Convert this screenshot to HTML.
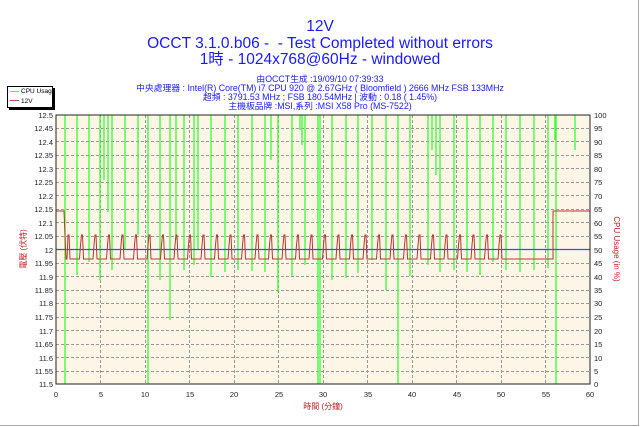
<!DOCTYPE html>
<html><head><meta charset="utf-8"><style>
body{margin:0;width:640px;height:427px;background:#fff;overflow:hidden;font-family:"Liberation Sans","Noto Sans CJK TC",sans-serif}
.t{position:absolute;left:0;width:640px;text-align:center;color:#1a1aff;white-space:nowrap}
</style></head><body>
<div style="position:absolute;left:0;top:0;width:638px;height:425px;border-right:1px solid #aaa;border-bottom:1px solid #aaa"></div>
<div class="t" style="top:18px;font-size:15.5px;line-height:17px">12V</div>
<div class="t" style="top:35px;font-size:15.5px;line-height:17px">OCCT 3.1.0.b06 - &nbsp;- Test Completed without errors</div>
<div class="t" style="top:51px;font-size:15.5px;line-height:17px">1時 - 1024x768@60Hz - windowed</div>
<div class="t" style="top:75px;font-size:8.8px;line-height:9px">由OCCT生成 :19/09/10 07:39:33<br>中央處理器 : Intel(R) Core(TM) i7 CPU 920 @ 2.67GHz ( Bloomfield ) 2666 MHz FSB 133MHz<br>超頻 : 3791.53 MHz ; FSB 180.54MHz | 波動 : 0.18 ( 1.45%)<br>主機板品牌 :MSI,系列 :MSI X58 Pro (MS-7522)</div>
<div style="position:absolute;left:7px;top:86px;width:44px;height:20px;border:1px solid #000;box-shadow:2px 2px 0 #000;background:#fff;font-size:6.5px;line-height:9.5px;white-space:nowrap;overflow:hidden">
<div><span style="display:inline-block;width:9px;height:1px;background:#4f4;vertical-align:middle;margin:0 2px 0 2px"></span>CPU Usage</div>
<div><span style="display:inline-block;width:9px;height:1px;background:#c44;vertical-align:middle;margin:0 2px 0 2px"></span>12V</div></div>
<svg width="640" height="427" style="position:absolute;left:0;top:0" font-family="Liberation Sans, sans-serif" font-size="7.5">
<rect x="56" y="115" width="534" height="269" fill="#fdf6e6"/>
<g stroke="#999" stroke-dasharray="3,2" stroke-width="1">
<path d="M100.5 115V384M145.5 115V384M189.5 115V384M234.5 115V384M278.5 115V384M323.5 115V384M367.5 115V384M412.5 115V384M456.5 115V384M501.5 115V384M545.5 115V384"/>
<path d="M56 128.5H590M56 141.5H590M56 155.5H590M56 168.5H590M56 182.5H590M56 195.5H590M56 209.5H590M56 222.5H590M56 236.5H590M56 263.5H590M56 276.5H590M56 290.5H590M56 303.5H590M56 317.5H590M56 330.5H590M56 344.5H590M56 357.5H590M56 371.5H590"/>
</g>
<g stroke="#3f3" stroke-width="1.3" fill="none">
<path d="M65 115V384M148 115V384M318 115V384M320 115V384M398 115V384M556 115V384M100 115V280M112 115V270M125 115V250M138 115V235M170 115V320M176 115V240M184 115V270M194 115V265M211 115V277M225 115V272M238 115V270M252 115V271M265 115V272M278 115V292M292 115V276M305 115V265M332 115V280M346 115V278M358 115V273M372 115V260M386 115V290M410 115V276M428 115V265M440 115V272M454 115V270M467 115V272M480 115V275M493 115V262M506 115V270M520 115V272M534 115V270M548 115V268M104 115V180M108 115V212M271 115V160M278 115V150M300 115V130M302 115V145M432 115V150M436 115V175M555 115V140M575 115V150M77 115V275M89 115V262M160 115V280M198 115V250"/>
</g>
<path d="M56 249.5H590" stroke="#44f" stroke-width="1.2"/>
<path d="M56 211H64L66 259h1l1-24h1l1 24h9.5l1-14l1-10h1l1 24 h9.5l1-14l1-10h1l1 24 h9.5l1-14l1-10h1l1 24 h9.5l1-14l1-10h1l1 24 h9.5l1-14l1-10h1l1 24 h9.5l1-14l1-10h1l1 24 h9.5l1-14l1-10h1l1 24 h9.5l1-14l1-10h1l1 24 h9.5l1-14l1-10h1l1 24 h9.5l1-14l1-10h1l1 24 h9.5l1-14l1-10h1l1 24 h9.5l1-14l1-10h1l1 24 h9.5l1-14l1-10h1l1 24 h9.5l1-14l1-10h1l1 24 h9.5l1-14l1-10h1l1 24 h9.5l1-14l1-10h1l1 24 h9.5l1-14l1-10h1l1 24 h9.5l1-14l1-10h1l1 24 h9.5l1-14l1-10h1l1 24 h9.5l1-14l1-10h1l1 24 h9.5l1-14l1-10h1l1 24 h9.5l1-14l1-10h1l1 24 h9.5l1-14l1-10h1l1 24 h9.5l1-14l1-10h1l1 24 h9.5l1-14l1-10h1l1 24 h9.5l1-14l1-10h1l1 24 h9.5l1-14l1-10h1l1 24 h9.5l1-14l1-10h1l1 24 h9.5l1-14l1-10h1l1 24 h9.5l1-14l1-10h1l1 24 h9.5l1-14l1-10h1l1 24 h9.5l1-14l1-10h1l1 24 H553V211H590" stroke="#b33" stroke-width="1" fill="none"/>
<rect x="56" y="115" width="534" height="269" fill="none" stroke="#222" stroke-width="1"/>
<g fill="#222" text-anchor="end">
<text x="53" y="118">12.5</text><text x="53" y="131">12.45</text><text x="53" y="145">12.4</text><text x="53" y="158">12.35</text><text x="53" y="172">12.3</text><text x="53" y="185">12.25</text><text x="53" y="199">12.2</text><text x="53" y="212">12.15</text><text x="53" y="226">12.1</text><text x="53" y="239">12.05</text><text x="53" y="253">12</text><text x="53" y="266">11.95</text><text x="53" y="280">11.9</text><text x="53" y="293">11.85</text><text x="53" y="306">11.8</text><text x="53" y="320">11.75</text><text x="53" y="334">11.7</text><text x="53" y="347">11.65</text><text x="53" y="361">11.6</text><text x="53" y="374">11.55</text><text x="53" y="387">11.5</text>
</g>
<g fill="#222">
<text x="594" y="118">100</text><text x="594" y="131">95</text><text x="594" y="145">90</text><text x="594" y="158">85</text><text x="594" y="172">80</text><text x="594" y="185">75</text><text x="594" y="199">70</text><text x="594" y="212">65</text><text x="594" y="226">60</text><text x="594" y="239">55</text><text x="594" y="253">50</text><text x="594" y="266">45</text><text x="594" y="280">40</text><text x="594" y="293">35</text><text x="594" y="306">30</text><text x="594" y="320">25</text><text x="594" y="334">20</text><text x="594" y="347">15</text><text x="594" y="361">10</text><text x="594" y="374">5</text><text x="594" y="387">0</text>
</g>
<g fill="#222" text-anchor="middle">
<text x="56" y="397">0</text><text x="101" y="397">5</text><text x="145" y="397">10</text><text x="190" y="397">15</text><text x="234" y="397">20</text><text x="279" y="397">25</text><text x="323" y="397">30</text><text x="368" y="397">35</text><text x="412" y="397">40</text><text x="457" y="397">45</text><text x="501" y="397">50</text><text x="546" y="397">55</text><text x="590" y="397">60</text>
</g>
<text x="323" y="409" fill="#b22" font-size="8" text-anchor="middle" font-family="Liberation Sans, Noto Sans CJK TC, sans-serif">時間 (分鐘)</text>
<text transform="translate(26 249) rotate(-90)" fill="#b22" font-size="8" text-anchor="middle" font-family="Liberation Sans, Noto Sans CJK TC, sans-serif">電壓 (伏特)</text>
<text transform="translate(614 249) rotate(90)" fill="#b22" font-size="8" text-anchor="middle" font-family="Liberation Sans, Noto Sans CJK TC, sans-serif">CPU Usage (in %)</text>
</svg>
</body></html>
